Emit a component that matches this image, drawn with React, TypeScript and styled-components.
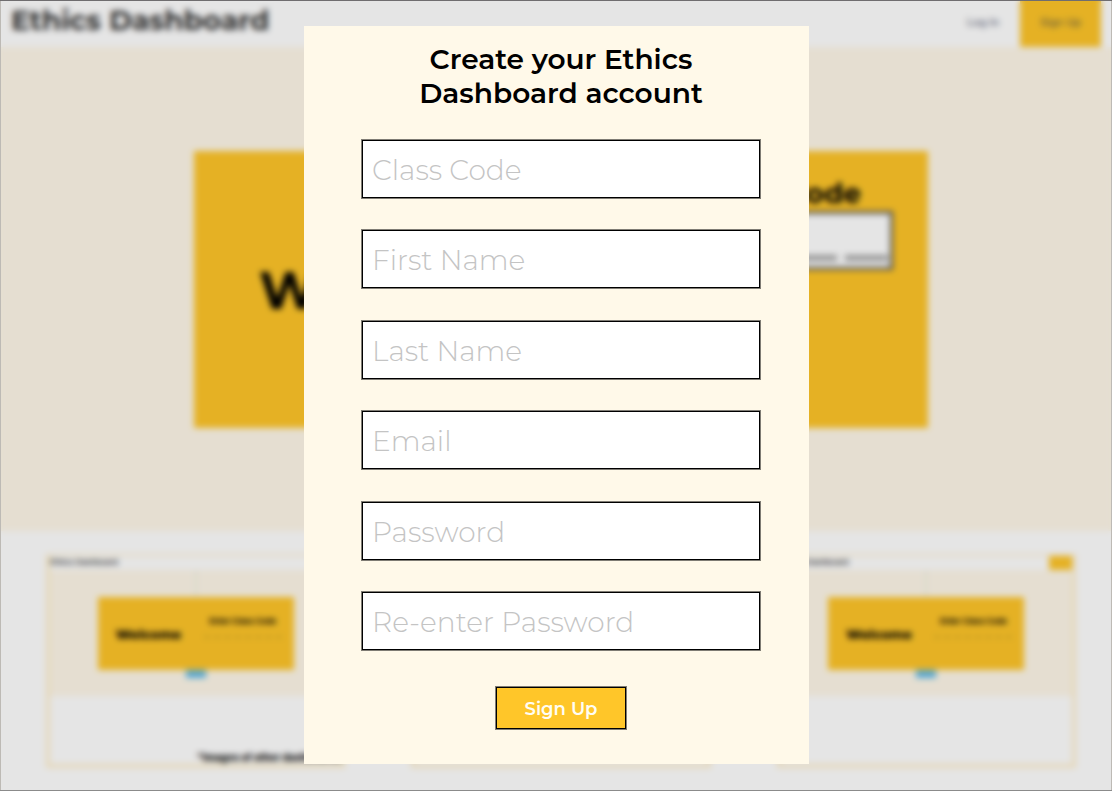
import React from "react";
import styled, { createGlobalStyle } from "styled-components";

const ink = "#000000";
const cream = "#fff8e9";
const gold = "#ffc629";
const sans = `Montserrat, Inter, "Open Sans", sans-serif`;
const small = `Inter, "Open Sans", sans-serif`;

const GlobalStyle = createGlobalStyle`
  *, *::before, *::after { box-sizing: border-box; }
  body { margin: 0; background: #ffffff; color: ${ink}; font-family: ${sans}; }
  h1, h2, p { margin: 0; }
`;

const Shell = styled.div`
  position: relative;
  min-height: 100vh;
  display: flex;
  flex-direction: column;
`;

/* Landing page */

const Landing = styled.div`
  flex: 1;
  display: flex;
  flex-direction: column;
`;

const TopBar = styled.header`
  display: flex;
  align-items: stretch;
  height: 47px;
  padding: 0 11px;
`;

const Brand = styled.p`
  flex: 1;
  font-size: 28px;
  line-height: 40px;
  font-weight: 700;
  color: #333333;
`;

const Nav = styled.nav`
  display: flex;
  align-items: stretch;
`;

const NavLink = styled.a<{ $filled?: boolean }>`
  display: flex;
  align-items: center;
  justify-content: center;
  width: ${(p) => (p.$filled ? "81px" : "74px")};
  padding-bottom: 3px;
  font-family: ${small};
  font-size: 11px;
  font-weight: 500;
  color: ${(p) => (p.$filled ? "#7a6c40" : "#6c7288")};
  background: ${(p) => (p.$filled ? gold : "transparent")};
  text-decoration: none;
`;

const Hero = styled.section`
  height: 484px;
  padding: 104px 184px 103px 194px;
  background: ${cream};
`;

const HeroCard = styled.div`
  display: flex;
  justify-content: space-between;
  height: 100%;
  padding: 0 35px 0 65px;
  background: ${gold};
`;

const Welcome = styled.p`
  align-self: center;
  padding-top: 2px;
  font-size: 52px;
  line-height: 60px;
  font-weight: 700;
`;

const CodePanel = styled.div`
  width: 308px;
  padding-top: 24px;
`;

const CodeTitle = styled.p`
  padding-right: 32px;
  font-size: 28px;
  line-height: 36px;
  font-weight: 700;
  text-align: right;
  white-space: nowrap;
`;

const CodeBox = styled.div`
  display: flex;
  align-items: flex-end;
  gap: 8px;
  height: 59px;
  padding: 0 2px 6px;
  border: 3px solid #555555;
  background: #ffffff;
`;

const Dash = styled.span`
  flex: 1;
  height: 6px;
  background: #a8a8a8;
`;

const Gallery = styled.section`
  display: grid;
  grid-template-columns: repeat(3, minmax(0, 1fr));
  gap: 66px;
  padding: 23px 36px 23px 46px;
`;

const Preview = styled.article`
  display: flex;
  flex-direction: column;
  height: 214px;
  border: 4px solid #fff1cf;
  border-top-width: 2px;
`;

const PreviewBar = styled.div`
  display: flex;
  justify-content: space-between;
  height: 14px;
  font-family: ${small};
  font-size: 8px;
  line-height: 12px;
  font-weight: 600;
  color: #444444;
`;

const PreviewBadge = styled.span`
  width: 23px;
  background: ${gold};
`;

const PreviewHero = styled.div`
  display: flex;
  flex-direction: column;
  align-items: center;
  height: 126px;
  background: ${cream};
`;

const Guide = styled.span`
  width: 2px;
  height: 27px;
  background: #f0efe2;
`;

const PreviewCard = styled.div`
  display: flex;
  align-items: center;
  justify-content: space-between;
  width: 196px;
  height: 73px;
  padding: 0 12px 0 18px;
  background: ${gold};
`;

const PreviewWelcome = styled.span`
  font-size: 13px;
  font-weight: 800;
`;

const PreviewCode = styled.div`
  display: flex;
  flex-direction: column;
  align-items: center;
  gap: 10px;
  width: 78px;
  padding-bottom: 14px;
  font-family: ${small};
  font-size: 8px;
  line-height: 10px;
  font-weight: 700;
  white-space: nowrap;
`;

const PreviewLine = styled.span`
  width: 100%;
  border-top: 2px dashed #d3a428;
`;

const PreviewTag = styled.span`
  width: 20px;
  height: 8px;
  background: #62bbea;
`;

const Caption = styled.p`
  padding: 54px 0 0 147px;
  font-family: ${small};
  font-size: 10px;
  line-height: 14px;
  font-weight: 800;
  white-space: nowrap;
`;

/* Dialog */

const Overlay = styled.div`
  position: absolute;
  inset: 0;
  display: flex;
  justify-content: center;
  align-items: flex-start;
  padding: 26px 0 0 1px;
  background: rgba(0, 0, 0, 0.1);
  backdrop-filter: blur(3px);
  box-shadow: inset 0 1px 0 #6f6d6f, inset 0 -1px 0 #8b8b8b,
    inset 1px 0 0 #bdbab5, inset -1px 0 0 #bdbab5;
`;

const Dialog = styled.form`
  display: flex;
  flex-direction: column;
  align-items: center;
  width: 505px;
  max-width: 100%;
  padding: 16px 49px 35px 58px;
  background: #fff9e9;
`;

const Title = styled.h1`
  max-width: 320px;
  font-size: 28px;
  line-height: 34px;
  font-weight: 600;
  text-align: center;
`;

const Fields = styled.div`
  display: flex;
  flex-direction: column;
  justify-content: space-between;
  width: 100%;
  min-height: 510px;
  margin: 30px 0 37px;
`;

const Field = styled.input`
  width: 100%;
  height: 58px;
  padding: 2px 9px 0;
  border: 1px solid ${ink};
  border-radius: 0;
  box-shadow: 0 0 0 1px rgba(0, 0, 0, 0.5);
  background: #ffffff;
  font-family: ${sans};
  font-size: 28px;
  font-weight: 300;
  color: ${ink};

  &::placeholder {
    color: #c4c4c4;
    opacity: 1;
  }
`;

const Submit = styled.button`
  width: 130px;
  height: 42px;
  padding: 1px 0 0;
  border: 1px solid ${ink};
  border-radius: 0;
  box-shadow: 0 0 0 1px rgba(0, 0, 0, 0.5);
  background: ${gold};
  font-family: ${sans};
  font-size: 18px;
  font-weight: 600;
  color: #fffdf4;
  cursor: pointer;
`;

const fields = [
  { name: "classCode", label: "Class Code", type: "text" },
  { name: "firstName", label: "First Name", type: "text" },
  { name: "lastName", label: "Last Name", type: "text" },
  { name: "email", label: "Email", type: "email" },
  { name: "password", label: "Password", type: "password" },
  { name: "passwordAgain", label: "Re-enter Password", type: "password" },
];

function DashboardPreview({ caption }: { caption?: string }) {
  return (
    <Preview>
      <PreviewBar>
        Ethics Dashboard
        <PreviewBadge />
      </PreviewBar>
      <PreviewHero>
        <Guide />
        <PreviewCard>
          <PreviewWelcome>Welcome</PreviewWelcome>
          <PreviewCode>
            Enter Class Code
            <PreviewLine />
          </PreviewCode>
        </PreviewCard>
        <PreviewTag />
      </PreviewHero>
      {caption && <Caption>{caption}</Caption>}
    </Preview>
  );
}

export default function App() {
  return (
    <>
      <GlobalStyle />
      <Shell>
        <Landing inert>
          <TopBar>
            <Brand>Ethics Dashboard</Brand>
            <Nav>
              <NavLink href="#login">Log In</NavLink>
              <NavLink href="#signup" $filled>
                Sign Up
              </NavLink>
            </Nav>
          </TopBar>
          <Hero>
            <HeroCard>
              <Welcome>Welcome</Welcome>
              <CodePanel>
                <CodeTitle>Enter Class Code</CodeTitle>
                <CodeBox>
                  {[0, 1, 2, 3, 4, 5].map((n) => (
                    <Dash key={n} />
                  ))}
                </CodeBox>
              </CodePanel>
            </HeroCard>
          </Hero>
          <Gallery>
            <DashboardPreview caption="*Images of other dashboards" />
            <DashboardPreview />
            <DashboardPreview />
          </Gallery>
        </Landing>
        <Overlay>
          <Dialog
            role="dialog"
            aria-labelledby="signup-title"
            onSubmit={(e: React.FormEvent) => e.preventDefault()}
          >
            <Title id="signup-title">Create your Ethics Dashboard account</Title>
            <Fields>
              {fields.map((f) => (
                <Field
                  key={f.name}
                  name={f.name}
                  type={f.type}
                  placeholder={f.label}
                  aria-label={f.label}
                />
              ))}
            </Fields>
            <Submit type="submit">Sign Up</Submit>
          </Dialog>
        </Overlay>
      </Shell>
    </>
  );
}
